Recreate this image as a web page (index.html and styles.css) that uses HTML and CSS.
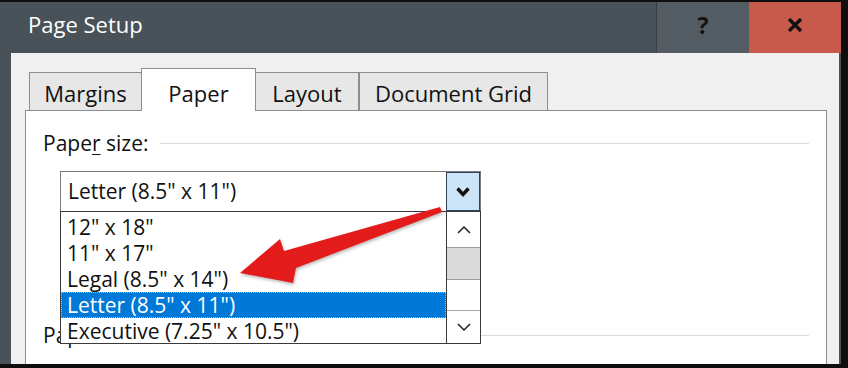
FILE: index.html
```html
<!DOCTYPE html>
<html>
<head>
<meta charset="utf-8">
<link rel="stylesheet" href="styles.css">
</head>
<body>
<div class="window">
  <div class="titlebar">
    <div class="title">Page Setup</div>
    <div class="tb-btn help">?</div>
    <div class="tb-btn close">
      <svg width="16" height="14" viewBox="0 0 16 14"><path d="M2 1 L14 13 M14 1 L2 13" stroke="#111" stroke-width="3.4" stroke-linecap="butt"/></svg>
    </div>
  </div>
  <div class="client">
    <div class="tabs">
      <div class="tab t-margins">Margins</div>
      <div class="tab active">Paper</div>
      <div class="tab t-layout">Layout</div>
      <div class="tab t-grid">Document Grid</div>
    </div>
    <div class="panel">
      <div class="group-label"><span>Pape<u>r</u> size:</span><div class="rule"></div></div>
      <div class="combo-wrap">
        <div class="combo">
          <span class="combo-text">Letter (8.5" x 11")</span>
          <div class="combo-btn">
            <svg width="16" height="12" viewBox="0 0 16 12"><path d="M2.5 2.5 L8 8.5 L13.5 2.5" fill="none" stroke="#111" stroke-width="3.4"/></svg>
          </div>
        </div>
        <div class="listbox">
          <div class="items">
            <div class="item">12" x 18"</div>
            <div class="item">11" x 17"</div>
            <div class="item">Legal (8.5" x 14")</div>
            <div class="item selected">Letter (8.5" x 11")</div>
            <div class="item">Executive (7.25" x 10.5")</div>
          </div>
          <div class="scrollbar">
            <div class="sb-up"><svg width="14" height="8" viewBox="0 0 14 8"><path d="M1 7 L7 1 L13 7" fill="none" stroke="#222" stroke-width="1.5"/></svg></div>
            <div class="sb-thumb"></div>
            <div class="sb-track"></div>
            <div class="sb-down"><svg width="14" height="8" viewBox="0 0 14 8"><path d="M1 1 L7 7 L13 1" fill="none" stroke="#222" stroke-width="1.5"/></svg></div>
          </div>
        </div>
      </div>
      <div class="group-label source"><span>Paper source:</span><div class="rule"></div></div>
    </div>
  </div>
</div>
<svg class="arrow" width="848" height="368" viewBox="0 0 848 368">
  <polygon points="240,273 280,239 284,251 440,207 442,212 296,268 293,283" fill="#e41b1b"/>
</svg>
</body>
</html>
```
FILE: styles.css
```css
html, body {
  margin: 0;
  padding: 0;
}
body {
  width: 848px;
  height: 368px;
  background: #0e0e0e;
  position: relative;
  overflow: hidden;
  font-family: "Open Sans", "Noto Sans", sans-serif;
}
.window {
  width: 841px;
  height: 362px;
  margin-top: 2px;
  background: #4a5259;
  display: flex;
  flex-direction: column;
}
.titlebar {
  height: 51px;
  display: flex;
  flex-shrink: 0;
}
.title {
  flex: 1;
  color: #ffffff;
  font-size: 22px;
  line-height: 30px;
  padding: 7px 0 0 28px;
}
.tb-btn {
  height: 51px;
  display: flex;
  align-items: center;
  justify-content: center;
}
.help {
  width: 93px;
  background: #535c63;
  border-left: 1px solid #393f45;
  color: #111;
  font-weight: 700;
  font-size: 23px;
  padding-bottom: 6px;
  box-sizing: border-box;
}
.close {
  width: 92px;
  background: #c85a4b;
  padding-bottom: 6px;
  box-sizing: border-box;
}
.client {
  flex: 1;
  margin: 0 2px 0 11px;
  background: #f0f0f0;
  padding: 15px 0 0 14px;
  overflow: hidden;
}
.tabs {
  display: flex;
  align-items: flex-end;
  padding-left: 4px;
  position: relative;
  z-index: 1;
}
.tab {
  box-sizing: border-box;
  height: 38px;
  border: 1px solid #8d8d8d;
  border-bottom: none;
  background: #e7e7e7;
  color: #111;
  font-size: 22px;
  line-height: 34px;
  padding-top: 3px;
  text-align: center;
}
.t-margins { width: 112px; border-right: none; }
.tab.active {
  width: 115px;
  height: 43px;
  margin-bottom: -1px;
  background: #ffffff;
  padding-top: 7px;
}
.t-layout { width: 103px; border-left: none; }
.t-grid { width: 189px; margin-left: 0; }
.panel {
  width: 802px;
  height: 300px;
  box-sizing: border-box;
  border: 1px solid #8d8d8d;
  background: #ffffff;
  padding: 19px 17px 0 17px;
}
.group-label {
  display: flex;
  align-items: center;
  height: 26px;
  font-size: 21px;
  line-height: 26px;
  color: #111;
}
.group-label u {
  text-decoration-thickness: 1px;
  text-underline-offset: 3px;
}
.rule {
  flex: 1;
  height: 1px;
  background: #d9d9d9;
  margin-left: 12px;
}
.combo-wrap {
  position: relative;
  width: 421px;
  margin: 15px 0 0 17px;
}
.combo {
  box-sizing: border-box;
  height: 41px;
  border: 1px solid #7a7a7a;
  background: #ffffff;
  display: flex;
}
.combo-text {
  flex: 1;
  padding-left: 7px;
  font-size: 21px;
  line-height: 39px;
  color: #111;
}
.combo-btn {
  box-sizing: border-box;
  width: 34px;
  height: 39px;
  background: #cce4f7;
  border: 1px solid #2f4459;
  display: flex;
  align-items: center;
  justify-content: center;
}
.listbox {
  position: absolute;
  left: 0;
  top: 40px;
  width: 421px;
  height: 133px;
  box-sizing: border-box;
  border: 1px solid #3a3a3a;
  background: #ffffff;
  display: flex;
  z-index: 2;
  overflow: hidden;
}
.items {
  flex: 1;
  padding-top: 2px;
}
.item {
  height: 26px;
  line-height: 26px;
  font-size: 21px;
  color: #111;
  padding-left: 6px;
  white-space: nowrap;
}
.item.selected {
  background: #0078d7;
  color: #ffffff;
  outline: 1px dotted #8fc0ec;
  outline-offset: -1px;
}
.scrollbar {
  width: 34px;
  box-sizing: border-box;
  border-left: 1px solid #3a3a3a;
  display: flex;
  flex-direction: column;
}
.sb-up {
  height: 35px;
  display: flex;
  align-items: center;
  justify-content: center;
}
.sb-thumb {
  height: 33px;
  box-sizing: border-box;
  background: #dadada;
  border-top: 1px solid #9c9c9c;
  border-bottom: 1px solid #9c9c9c;
}
.sb-track {
  height: 30px;
}
.sb-down {
  flex: 1;
  border-top: 1px solid #a8a8a8;
  display: flex;
  align-items: center;
  justify-content: center;
}
.group-label.source {
  margin-top: 110px;
}
.arrow {
  position: absolute;
  left: 0;
  top: 0;
  z-index: 10;
  pointer-events: none;
  filter: drop-shadow(1px 2px 1.5px rgba(0,0,0,0.25));
}
```
